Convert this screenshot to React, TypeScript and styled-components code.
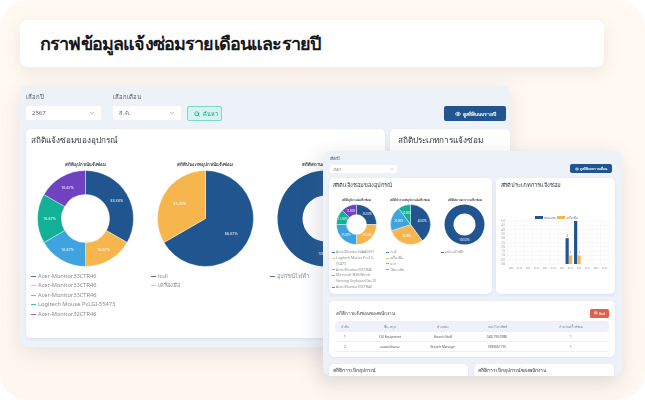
import React from "react";
import styled, { createGlobalStyle } from "styled-components";
import { ChevronDown, Search, Eye, Printer } from "lucide-react";

const BLUE = "#20558f";
const YELLOW = "#f6b64d";
const SKY = "#3ea3df";
const TEAL = "#12b096";
const PURPLE = "#6f42c1";

const GlobalStyle = createGlobalStyle`
  html, body {
    margin: 0;
    padding: 0;
    background: #fff;
  }
  * {
    box-sizing: border-box;
  }
`;

const Canvas = styled.div`
  position: relative;
  width: 645px;
  height: 400px;
  padding: 20px 41px 0 20px;
  overflow: hidden;
  border-radius: 28px;
  background: linear-gradient(180deg, #fff9f2 0%, #fef7ef 100%);
  font-family: "Noto Sans", "Open Sans", sans-serif;
`;

const Banner = styled.div`
  height: 47px;
  padding-left: 20px;
  display: flex;
  align-items: center;
  background: #fff;
  border-radius: 8px;
  box-shadow: 0 5px 16px rgba(120, 110, 100, 0.12);
`;

const BannerTitle = styled.h1`
  margin: 0;
  font-size: 18px;
  letter-spacing: -0.85px;
  font-weight: 600;
  color: #17171c;
`;

const BackWindow = styled.section`
  width: 490px;
  height: 262px;
  margin-top: 18px;
  padding: 8px 0 9px 6px;
  background: #edf1f8;
  border-radius: 8px;
  overflow: hidden;
  box-shadow: 0 6px 20px rgba(110, 120, 140, 0.16);
  filter: blur(0.4px);
`;

const FrontWindow = styled.section`
  position: absolute;
  left: 323px;
  top: 151px;
  width: 299px;
  height: 225px;
  padding: 5px 7px 0 6px;
  background: #edf1f8;
  border-radius: 8px;
  overflow: hidden;
  box-shadow: -4px 6px 20px rgba(90, 100, 125, 0.22);
  filter: blur(0.4px);
`;

const Toolbar = styled.div<{ $small?: boolean }>`
  display: flex;
  align-items: flex-end;
  justify-content: space-between;
  padding-right: ${(p) => (p.$small ? "3px" : "4px")};
  height: ${(p) => (p.$small ? "17px" : "28px")};
  margin-bottom: ${(p) => (p.$small ? "5px" : "8px")};
`;

const Filters = styled.div<{ $small?: boolean }>`
  display: flex;
  align-items: flex-end;
  gap: 6px;
  padding-left: ${(p) => (p.$small ? "1px" : "0")};
`;

const Field = styled.label<{ $width: number; $gapRight?: number; $small?: boolean }>`
  display: flex;
  flex-direction: column;
  width: ${(p) => p.$width}px;
  margin-right: ${(p) => p.$gapRight ?? 0}px;
  padding-bottom: ${(p) => (p.$small ? "0" : "1px")};
`;

const FieldLabel = styled.span<{ $small?: boolean }>`
  font-size: ${(p) => (p.$small ? "4px" : "6px")};
  line-height: ${(p) => (p.$small ? "6px" : "9px")};
  margin-bottom: ${(p) => (p.$small ? "3px" : "4px")};
  color: #555b66;
`;

const SelectBox = styled.div<{ $small?: boolean }>`
  display: flex;
  align-items: center;
  justify-content: space-between;
  height: ${(p) => (p.$small ? "8px" : "14px")};
  padding: 0 ${(p) => (p.$small ? "3px" : "6px")};
  background: #fff;
  border-radius: 2px;
  font-size: ${(p) => (p.$small ? "3.5px" : "6px")};
  color: #666c75;
`;

const SearchButton = styled.button`
  display: flex;
  align-items: center;
  gap: 3px;
  width: 35px;
  height: 15px;
  padding: 0 0 0 6px;
  background: #d5f4ef;
  border: 1px solid #7fd6c8;
  border-radius: 2px;
  font-family: inherit;
  font-size: 5.5px;
  color: #0d9c88;
`;

const ViewButton = styled.button<{ $small?: boolean }>`
  display: flex;
  align-items: center;
  justify-content: center;
  gap: ${(p) => (p.$small ? "1px" : "2px")};
  width: ${(p) => (p.$small ? "42px" : "62px")};
  height: ${(p) => (p.$small ? "9px" : "15px")};
  padding: 0;
  background: ${BLUE};
  border: 0;
  border-radius: 2px;
  font-family: inherit;
  font-size: ${(p) => (p.$small ? "3.4px" : "5.2px")};
  font-weight: 600;
  white-space: nowrap;
  color: #fff;
`;

const Row = styled.div<{ $columns: string; $gap: number }>`
  display: grid;
  grid-template-columns: ${(p) => p.$columns};
  gap: ${(p) => p.$gap}px;
`;

const Card = styled.div<{ $height: number }>`
  height: ${(p) => p.$height}px;
  background: #fff;
  border-radius: 5px;
  overflow: hidden;
  box-shadow: 0 1px 3px rgba(100, 110, 130, 0.12);
`;

const CardTitle = styled.h2<{ $size: number; $top: number; $left: number }>`
  margin: 0;
  padding: ${(p) => p.$top}px 0 0 ${(p) => p.$left}px;
  font-size: ${(p) => p.$size}px;
  line-height: 1.3;
  font-weight: 500;
  color: #33363c;
`;

const ChartRow = styled.div<{ $top: number }>`
  display: grid;
  grid-template-columns: repeat(3, 1fr);
  margin-top: ${(p) => p.$top}px;
`;

const ChartCol = styled.div`
  display: flex;
  flex-direction: column;
  min-width: 0;
`;

const ChartName = styled.div<{ $small?: boolean }>`
  text-align: center;
  white-space: nowrap;
  font-size: ${(p) => (p.$small ? "3.1px" : "4.4px")};
  line-height: ${(p) => (p.$small ? "4px" : "6px")};
  margin-bottom: ${(p) => (p.$small ? "2px" : "3px")};
  font-weight: 700;
  color: #3a3d44;
`;

const PieWrap = styled.div`
  display: flex;
  justify-content: center;
`;

const Legend = styled.ul<{ $small?: boolean }>`
  list-style: none;
  margin: ${(p) => (p.$small ? "4px 0 0" : "5px 0 0")};
  padding: 0 0 0 ${(p) => (p.$small ? "3px" : "5px")};
  font-size: ${(p) => (p.$small ? "3.5px" : "5.7px")};
  line-height: ${(p) => (p.$small ? "5.8px" : "9.5px")};
  color: #878b92;
`;

const LegendItem = styled.li<{ $color: string; $small?: boolean }>`
  position: relative;
  padding-left: ${(p) => (p.$small ? "4px" : "7px")};

  &::before {
    content: "";
    position: absolute;
    left: 0;
    top: ${(p) => (p.$small ? "2.5px" : "4px")};
    width: ${(p) => (p.$small ? "3px" : "5px")};
    height: 1px;
    background: ${(p) => p.$color};
    opacity: 0.8;
  }
`;

const BarArea = styled.div`
  margin-top: 23px;
`;

const TableCard = styled.div`
  height: 56px;
  margin: 7px 0;
  padding: 7px 6px 0;
  background: #fff;
  border-radius: 5px;
  box-shadow: 0 1px 3px rgba(100, 110, 130, 0.1);
`;

const TableHead = styled.div`
  display: flex;
  align-items: center;
  justify-content: space-between;
  height: 10px;
  margin-bottom: 3px;
`;

const TableTitle = styled.h3`
  margin: 0 0 0 1px;
  font-size: 4.6px;
  font-weight: 500;
  color: #33363c;
`;

const PrintButton = styled.button`
  display: flex;
  align-items: center;
  justify-content: center;
  gap: 1px;
  width: 19px;
  height: 9px;
  padding: 0;
  background: #e2604a;
  border: 0;
  border-radius: 1.5px;
  font-family: inherit;
  font-size: 3.4px;
  color: #fff;
`;

const GridRow = styled.div<{ $head?: boolean }>`
  display: grid;
  grid-template-columns: 20px 70px 36px 72px 76px;
  align-items: center;
  height: ${(p) => (p.$head ? "11px" : "10px")};
  background: ${(p) => (p.$head ? "#eef2f8" : "transparent")};
  border-radius: ${(p) => (p.$head ? "4px" : "0")};
  border-bottom: ${(p) => (p.$head ? "0" : "0.5px solid #eef0f3")};
  font-size: 3.2px;
  color: ${(p) => (p.$head ? "#7b7f87" : "#55585f")};
  text-align: center;
  white-space: nowrap;
`;

type Slice = { value: number; color: string; label?: string };

function polar(r: number, deg: number): [number, number] {
  const rad = ((deg - 90) * Math.PI) / 180;
  return [r * Math.cos(rad), r * Math.sin(rad)];
}

function slicePath(r: number, inner: number, from: number, to: number) {
  const large = to - from > 180 ? 1 : 0;
  const [x1, y1] = polar(r, from);
  const [x2, y2] = polar(r, to);
  if (inner === 0) {
    return `M0 0L${x1} ${y1}A${r} ${r} 0 ${large} 1 ${x2} ${y2}Z`;
  }
  const [x3, y3] = polar(inner, to);
  const [x4, y4] = polar(inner, from);
  return `M${x1} ${y1}A${r} ${r} 0 ${large} 1 ${x2} ${y2}L${x3} ${y3}A${inner} ${inner} 0 ${large} 0 ${x4} ${y4}Z`;
}

function Pie(props: { r: number; inner: number; slices: Slice[]; font: number }) {
  const { r, inner, slices, font } = props;
  const total = slices.reduce((sum, s) => sum + s.value, 0);
  let start = 0;
  return (
    <svg width={r * 2 + 1} height={r * 2 + 1} viewBox={`${-r - 0.5} ${-r - 0.5} ${r * 2 + 1} ${r * 2 + 1}`}>
      {slices.length === 1 ? (
        <path
          d={`M0 ${-r}A${r} ${r} 0 1 1 0 ${r}A${r} ${r} 0 1 1 0 ${-r}ZM0 ${-inner}A${inner} ${inner} 0 1 0 0 ${inner}A${inner} ${inner} 0 1 0 0 ${-inner}Z`}
          fill={slices[0].color}
        />
      ) : (
        slices.map((s) => {
          const from = start;
          const to = start + (s.value / total) * 360;
          start = to;
          const [lx, ly] = polar(inner ? (r + inner) / 2 : r * 0.62, (from + to) / 2);
          return (
            <g key={s.color}>
              <path d={slicePath(r, inner, from, to)} fill={s.color} stroke="#fff" strokeWidth={0.4} />
              <text x={lx} y={ly + font / 3} fontSize={font} fill="#fff" textAnchor="middle">
                {s.label}
              </text>
            </g>
          );
        })
      )}
      {slices.length === 1 && (
        <text x={0} y={(r + inner) / 2 + font / 3} fontSize={font} fill="#fff" textAnchor="middle">
          {slices[0].label}
        </text>
      )}
    </svg>
  );
}

const backCharts = [
  {
    name: "สถิติอุปกรณ์แจ้งซ่อม",
    inner: 24,
    slices: [
      { value: 33.33, color: BLUE, label: "33.33%" },
      { value: 16.67, color: YELLOW, label: "16.67%" },
      { value: 16.67, color: SKY, label: "16.67%" },
      { value: 16.67, color: TEAL, label: "16.67%" },
      { value: 16.67, color: PURPLE, label: "16.67%" },
    ],
    legend: [
      ["Acer-Monitor33CTR46", BLUE],
      ["Acer-Monitor33CTR46", YELLOW],
      ["Acer-Monitor33CTR46", SKY],
      ["Logitech Mouse PxLGI-55473", TEAL],
      ["Acer-Monitor32CTR46", PURPLE],
    ],
  },
  {
    name: "สถิติประเภทอุปกรณ์แจ้งซ่อม",
    inner: 0,
    slices: [
      { value: 66.67, color: BLUE, label: "66.67%" },
      { value: 33.33, color: YELLOW, label: "33.33%" },
    ],
    legend: [
      ["null", BLUE],
      ["เครื่องมือ", YELLOW],
    ],
  },
  {
    name: "สถิติสถานะการแจ้งซ่อม",
    inner: 23,
    slices: [{ value: 100, color: BLUE, label: "100.00%" }],
    legend: [["อุปกรณ์ไฟฟ้า", BLUE]],
  },
];

const frontCharts = [
  {
    name: "สถิติอุปกรณ์แจ้งซ่อม",
    inner: 10,
    slices: [
      { value: 25, color: BLUE, label: "25.00%" },
      { value: 25, color: YELLOW, label: "25.00%" },
      { value: 25, color: SKY, label: "25.00%" },
      { value: 12.5, color: TEAL, label: "12.50%" },
      { value: 12.5, color: PURPLE, label: "12.50%" },
    ],
    legend: [
      ["Acer-Monitor54AA5507", BLUE],
      ["Logitech Mouse Pro33-55473", YELLOW],
      ["Acer-Monitor33CTR46", SKY],
      ["Microsoft RGB Wired Gaming Keyboard Gn-10", TEAL],
      ["Acer-Monitor33CTR46", PURPLE],
    ],
  },
  {
    name: "สถิติประเภทอุปกรณ์แจ้งซ่อม",
    inner: 0,
    slices: [
      { value: 40, color: BLUE, label: "40.00%" },
      { value: 30, color: YELLOW, label: "30.00%" },
      { value: 20, color: SKY, label: "20.00%" },
      { value: 10, color: TEAL, label: "10.00%" },
    ],
    legend: [
      ["null", BLUE],
      ["เครื่องมือ", YELLOW],
      ["ฉาก", SKY],
      ["ไม้บรรทัด", TEAL],
    ],
  },
  {
    name: "สถิติสถานะการแจ้งซ่อม",
    inner: 11,
    slices: [{ value: 100, color: BLUE, label: "100.00%" }],
    legend: [["อุปกรณ์ไฟฟ้า", BLUE]],
  },
];

function BarChart() {
  const left = 11;
  const right = 113;
  const top = 9;
  const bottom = 52;
  const stepX = (right - left) / 12;
  const y = (v: number) => bottom - (v / 5) * (bottom - top);
  const bars = [
    { cat: 7, blue: 3, yellow: 1 },
    { cat: 8, blue: 5, yellow: 1 },
  ];
  return (
    <svg width={119} height={62} viewBox="0 0 119 62">
      <rect x={39} y={4} width={8} height={3} fill={BLUE} />
      <text x={48} y={6.8} fontSize={3} fill="#777">ซ่อมแซม</text>
      <rect x={61} y={4} width={8} height={3} fill={YELLOW} />
      <text x={70} y={6.8} fontSize={3} fill="#777">เครื่องมือ</text>
      {Array.from({ length: 11 }, (_, i) => (
        <g key={i}>
          <line x1={left} x2={right} y1={y(i / 2)} y2={y(i / 2)} stroke="#e9ebef" strokeWidth={0.4} />
          <text x={left - 2} y={y(i / 2) + 1} fontSize={2.6} fill="#888" textAnchor="end">
            {(i / 2).toFixed(1)}
          </text>
        </g>
      ))}
      {Array.from({ length: 13 }, (_, i) => (
        <line key={i} x1={left + i * stepX} x2={left + i * stepX} y1={top} y2={bottom} stroke="#eff1f4" strokeWidth={0.4} />
      ))}
      {Array.from({ length: 12 }, (_, i) => (
        <text key={i} x={left + (i + 0.5) * stepX} y={57} fontSize={2.6} fill="#888" textAnchor="middle">
          ม.ค.
        </text>
      ))}
      {bars.map((b) => {
        const cx = left + (b.cat + 0.5) * stepX - 2;
        return (
          <g key={b.cat}>
            <rect x={cx - 3.2} y={y(b.blue)} width={3.2} height={bottom - y(b.blue)} fill={BLUE} />
            <rect x={cx + 0.2} y={y(b.yellow)} width={3.2} height={bottom - y(b.yellow)} fill={YELLOW} />
            {b.blue < 5 && (
              <text x={cx - 1.6} y={y(b.blue) - 1.5} fontSize={2.8} fill="#666" textAnchor="middle">
                {b.blue}
              </text>
            )}
            <text x={cx + 1.8} y={y(b.yellow) - 1.5} fontSize={2.8} fill="#666" textAnchor="middle">
              {b.yellow}
            </text>
          </g>
        );
      })}
    </svg>
  );
}

const staff = [
  { no: 1, name: "CJU Equipment", role: "Branch Staff", phone: "049-799-9986", count: 1 },
  { no: 2, name: "แอนดรี อ้นอนะ", role: "Branch Manager", phone: "0993667720", count: 1 },
];

export default function App() {
  return (
    <Canvas>
      <GlobalStyle />
      <Banner>
        <BannerTitle>กราฟข้อมูลแจ้งซ่อมรายเดือนและรายปี</BannerTitle>
      </Banner>

      <BackWindow>
        <Toolbar>
          <Filters>
            <Field $width={75} $gapRight={6}>
              <FieldLabel>เลือกปี</FieldLabel>
              <SelectBox>
                2567 <ChevronDown size={6} />
              </SelectBox>
            </Field>
            <Field $width={68}>
              <FieldLabel>เลือกเดือน</FieldLabel>
              <SelectBox>
                ส.ค. <ChevronDown size={6} />
              </SelectBox>
            </Field>
            <SearchButton>
              <Search size={6} strokeWidth={3} /> ค้นหา
            </SearchButton>
          </Filters>
          <ViewButton>
            <Eye size={6} strokeWidth={3} /> ดูสถิติแบบรายปี
          </ViewButton>
        </Toolbar>
        <Row $columns="359px 120px" $gap={5}>
          <Card $height={209}>
            <CardTitle $size={8.2} $top={6} $left={5}>สถิติแจ้งซ่อมของอุปกรณ์</CardTitle>
            <ChartRow $top={15}>
              {backCharts.map((c) => (
                <ChartCol key={c.name}>
                  <ChartName>{c.name}</ChartName>
                  <PieWrap>
                    <Pie r={48} inner={c.inner} slices={c.slices} font={3.8} />
                  </PieWrap>
                  <Legend>
                    {c.legend.map(([text, color], i) => (
                      <LegendItem key={i} $color={color}>{text}</LegendItem>
                    ))}
                  </Legend>
                </ChartCol>
              ))}
            </ChartRow>
          </Card>
          <Card $height={209}>
            <CardTitle $size={8.2} $top={6} $left={8}>สถิติประเภทการแจ้งซ่อม</CardTitle>
          </Card>
        </Row>
      </BackWindow>

      <FrontWindow>
        <Toolbar $small>
          <Filters $small>
            <Field $width={67} $small>
              <FieldLabel $small>เลือกปี</FieldLabel>
              <SelectBox $small>
                2567 <ChevronDown size={4} />
              </SelectBox>
            </Field>
          </Filters>
          <ViewButton $small>
            <Eye size={4} strokeWidth={3} /> ดูสถิติแบบรายเดือน
          </ViewButton>
        </Toolbar>
        <Row $columns="163px 119px" $gap={4}>
          <Card $height={116}>
            <CardTitle $size={5.6} $top={4} $left={4}>สถิติแจ้งซ่อมของอุปกรณ์</CardTitle>
            <ChartRow $top={9}>
              {frontCharts.map((c) => (
                <ChartCol key={c.name}>
                  <ChartName $small>{c.name}</ChartName>
                  <PieWrap>
                    <Pie r={20} inner={c.inner} slices={c.slices} font={2.7} />
                  </PieWrap>
                  <Legend $small>
                    {c.legend.map(([text, color], i) => (
                      <LegendItem key={i} $color={color} $small>{text}</LegendItem>
                    ))}
                  </Legend>
                </ChartCol>
              ))}
            </ChartRow>
          </Card>
          <Card $height={116}>
            <CardTitle $size={5.6} $top={4} $left={5}>สถิติประเภทการแจ้งซ่อม</CardTitle>
            <BarArea>
              <BarChart />
            </BarArea>
          </Card>
        </Row>
        <TableCard>
          <TableHead>
            <TableTitle>สถิติการแจ้งซ่อมของพนักงาน</TableTitle>
            <PrintButton>
              <Printer size={3.5} strokeWidth={3} /> พิมพ์
            </PrintButton>
          </TableHead>
          <GridRow $head>
            <span>ลำดับ</span>
            <span>ชื่อ - สกุล</span>
            <span>ตำแหน่ง</span>
            <span>เบอร์โทรศัพท์</span>
            <span>จำนวนครั้งที่ซ่อม</span>
          </GridRow>
          {staff.map((s) => (
            <GridRow key={s.no}>
              <span>{s.no}</span>
              <span>{s.name}</span>
              <span>{s.role}</span>
              <span>{s.phone}</span>
              <span>{s.count}</span>
            </GridRow>
          ))}
        </TableCard>
        <Row $columns="139px 140px" $gap={6}>
          <Card $height={30}>
            <CardTitle $size={5} $top={3} $left={4}>สถิติการเบิกอุปกรณ์</CardTitle>
          </Card>
          <Card $height={30}>
            <CardTitle $size={5} $top={3} $left={4}>สถิติการเบิกอุปกรณ์ของพนักงาน</CardTitle>
          </Card>
        </Row>
      </FrontWindow>
    </Canvas>
  );
}
